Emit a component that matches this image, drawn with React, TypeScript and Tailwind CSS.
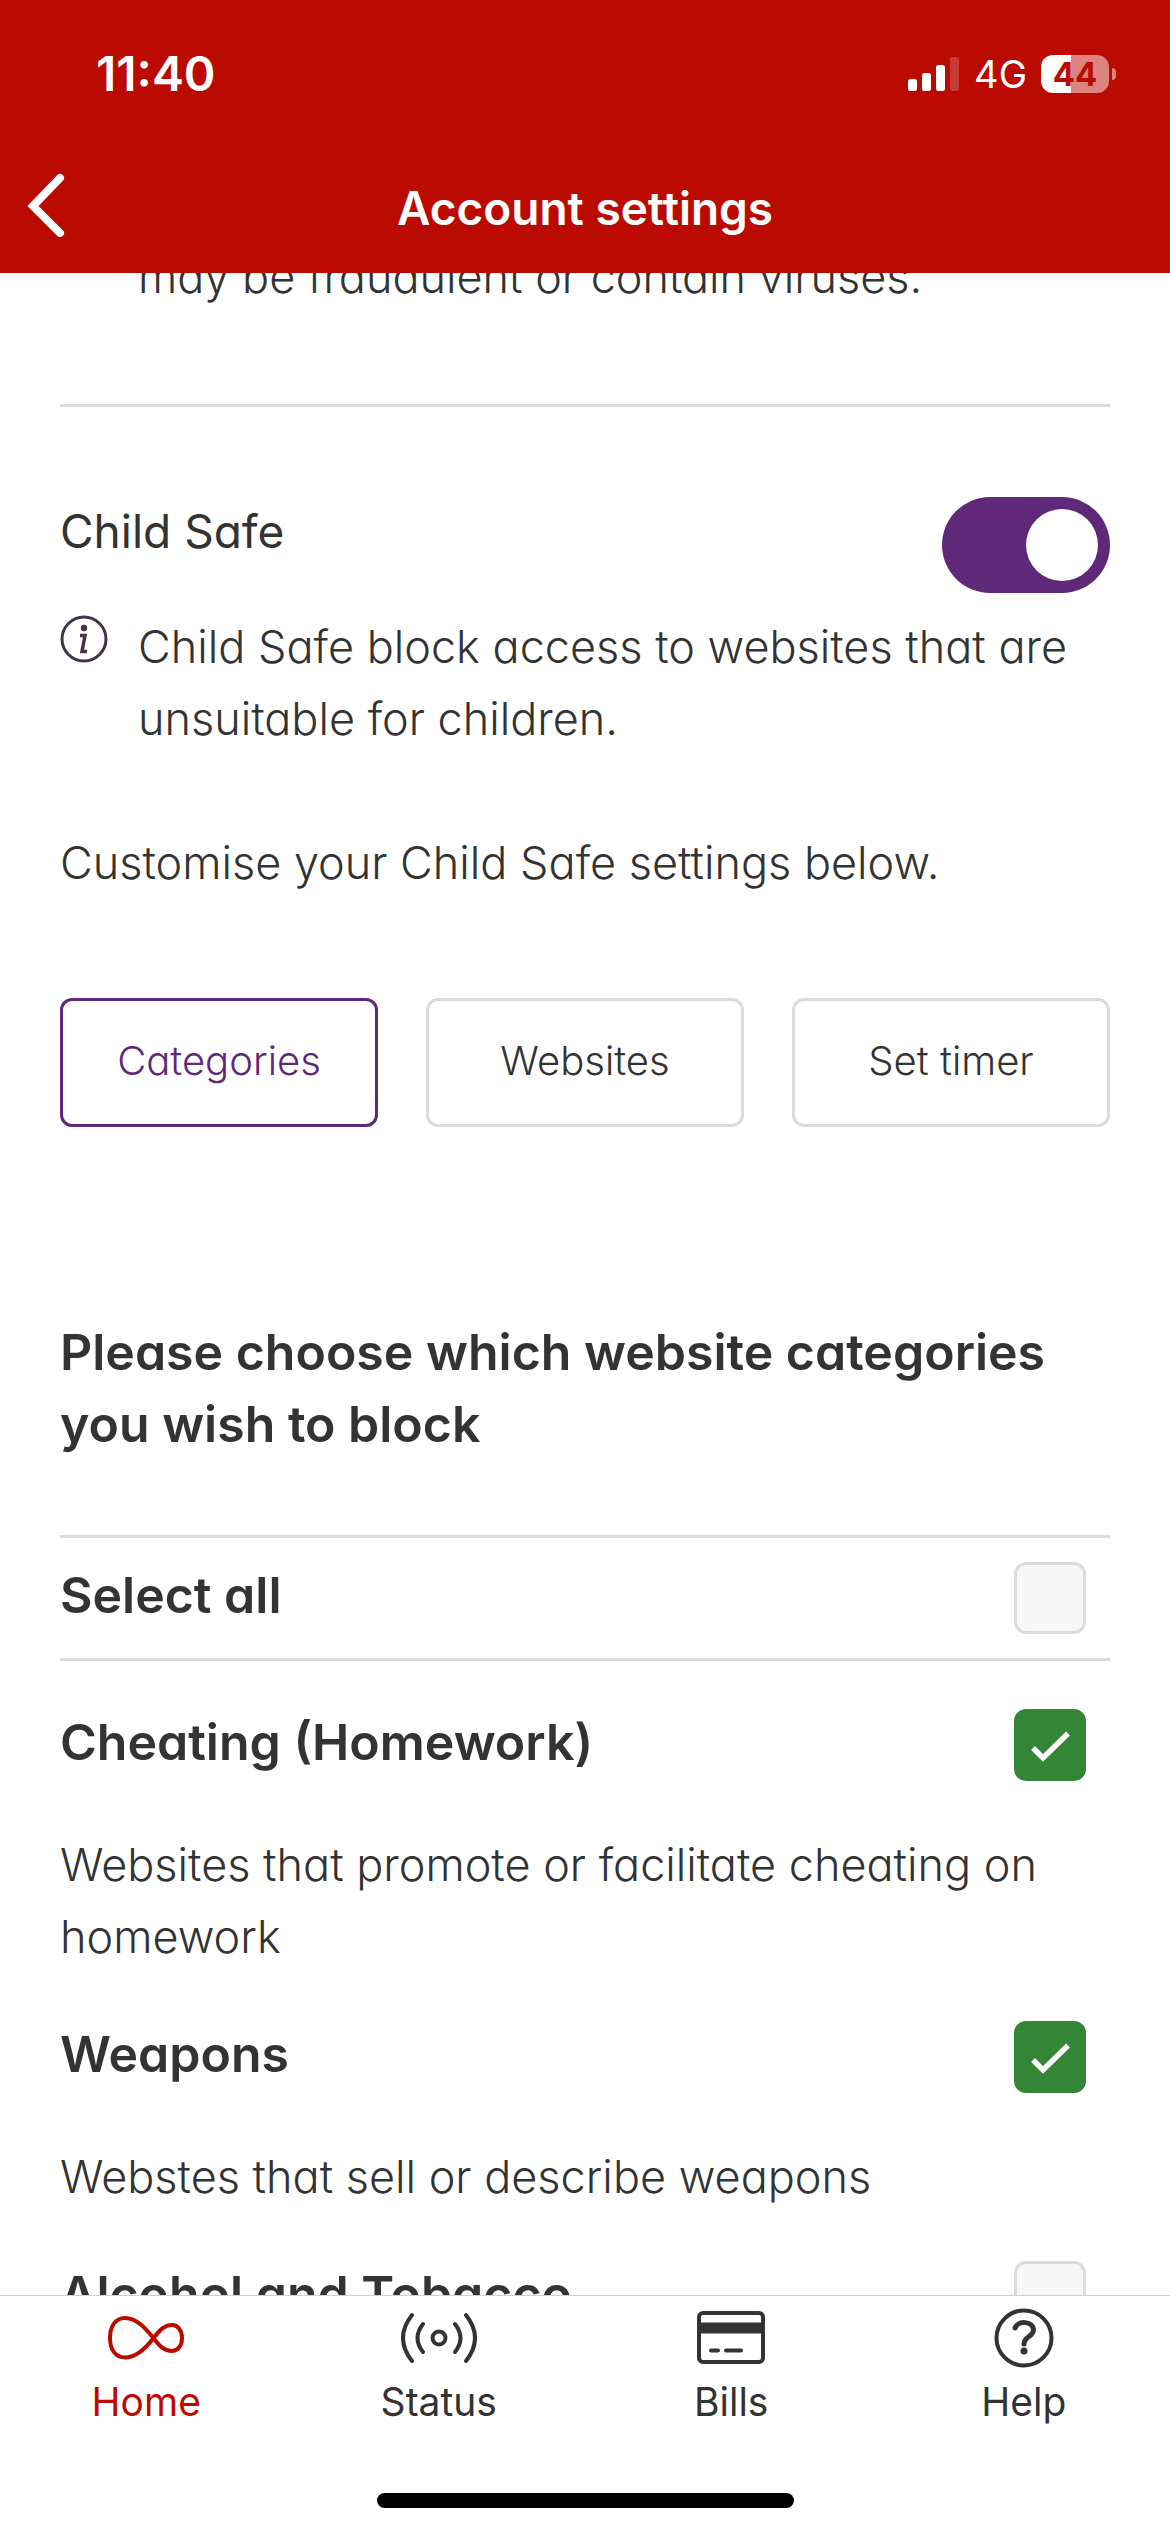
import React, { useState } from "react";

function Tick() {
  return (
    <svg viewBox="0 0 72 72" className="pointer-events-none absolute inset-0 hidden size-full peer-checked:block" fill="none" stroke="#fff" strokeWidth="5.500" aria-hidden="true">
      <path d="M19 39 29 49 54 24.500" />
    </svg>
  );
}

function CheckRow({ id, title, defaultChecked }: { id: string; title: string; defaultChecked?: boolean }) {
  return (
    <div className="flex items-start justify-between pr-6">
      <label htmlFor={id} className="text-[50px] leading-[66px] font-semibold">{title}</label>
      <span className="relative size-[72px] shrink-0">
        <input
          id={id}
          type="checkbox"
          defaultChecked={defaultChecked}
          className="peer block size-full appearance-none rounded-xl border-3 border-[#dbdbdb] bg-[#f7f7f7] checked:border-[#358537] checked:bg-[#358537]"
        />
        <Tick />
      </span>
    </div>
  );
}

function Category({ id, title, text, defaultChecked }: { id: string; title: string; text: string; defaultChecked?: boolean }) {
  return (
    <section className="flex flex-col gap-12 pb-12">
      <CheckRow id={id} title={title} defaultChecked={defaultChecked} />
      <p>{text}</p>
    </section>
  );
}

const tabs = ["Categories", "Websites", "Set timer"];

function HomeIcon() {
  return (
    <svg viewBox="0 0 76 60" className="h-[60px] w-[76px]" fill="none" stroke="currentColor" strokeWidth="4" aria-hidden="true">
      <path d="M45.500 30C38 21 29 10 17 10C7 10 2 19 2 30C2 41 7 49.500 17 49.500C29 49.500 38 40 45.500 30C51 23 56 17 64 17C70 17 74 22.500 74 30C74 37.500 70 43 64 43C56 43 51 37.500 45.500 30Z" />
    </svg>
  );
}

function StatusIcon() {
  return (
    <svg viewBox="0 0 76 60" className="h-[60px] w-[76px]" fill="none" stroke="currentColor" strokeWidth="4" strokeLinecap="round" aria-hidden="true">
      <circle cx="38" cy="30" r="6.500" />
      <path d="M22 16Q11 30 22 44M54 16Q65 30 54 44M11 7Q-7 30 11 53M65 7Q83 30 65 53" />
    </svg>
  );
}

function BillsIcon() {
  return (
    <svg viewBox="0 0 76 60" className="h-[60px] w-[76px]" fill="none" stroke="currentColor" strokeWidth="4" strokeLinecap="round" aria-hidden="true">
      <rect x="6" y="5" width="64" height="49" rx="4" />
      <path d="M6 20H70" strokeWidth="11" strokeLinecap="butt" />
      <path d="M18 42.500H25M33 42.500H48" />
    </svg>
  );
}

function HelpIcon() {
  return (
    <svg viewBox="0 0 76 60" className="h-[60px] w-[76px]" fill="none" stroke="currentColor" strokeWidth="4" aria-hidden="true">
      <circle cx="38" cy="30" r="27.500" />
      <path d="M29 20C32 12 47 13 47.500 22C47.500 29 38 28 38 36" strokeWidth="5" strokeLinecap="round" />
      <circle cx="38" cy="43" r="3.500" fill="currentColor" stroke="none" />
    </svg>
  );
}

const navItems = [
  { name: "Home", Icon: HomeIcon },
  { name: "Status", Icon: StatusIcon },
  { name: "Bills", Icon: BillsIcon },
  { name: "Help", Icon: HelpIcon },
];

export default function App() {
  const [tab, setTab] = useState("Categories");
  return (
    <div className="flex h-screen flex-col overflow-hidden bg-white font-['Inter','Liberation_Sans',sans-serif] text-[#333]">
      <header className="relative z-10 shrink-0 bg-[#bb0a00] text-white">
        <div className="flex h-36 items-center justify-between pt-1 pr-[54px] pl-24">
          <time className="text-[48px] font-semibold">11:40</time>
          <div className="flex items-center gap-3.5">
            <svg viewBox="0 0 52 34" className="h-[34px] w-[52px]" fill="#fff" role="img" aria-label="Signal strength">
              <rect x="0" y="22" width="9" height="12" rx="2.500" />
              <rect x="14" y="16" width="9" height="18" rx="2.500" />
              <rect x="28" y="8" width="9" height="26" rx="2.500" />
              <rect x="42" y="0" width="9" height="34" rx="2.500" opacity=".2" />
            </svg>
            <span className="text-[38px]">4G</span>
            <div className="flex items-center gap-[3px]">
              <span className="flex h-[38px] w-[68px] items-center justify-center rounded-xl bg-linear-to-r from-white from-44% to-[#dd8480] to-44% text-[33px] leading-[38px] font-bold text-[#bb0a00]">44</span>
              <span className="h-3 w-1 rounded-r-full bg-[#dd8480]" />
            </div>
          </div>
        </div>
        <div className="grid h-[129px] grid-cols-[1fr_auto_1fr] items-center">
          <button type="button" aria-label="Back" className="ml-6 w-12 pb-2">
            <svg viewBox="0 0 48 64" className="h-16 w-12" fill="none" stroke="#fff" strokeWidth="8" strokeLinecap="round" aria-hidden="true">
              <path d="M36 5 9 33 36 60" />
            </svg>
          </button>
          <h1 className="text-[46px] font-semibold [font-feature-settings:'cv11']">Account settings</h1>
          <span />
        </div>
      </header>

      <main className="min-h-0 flex-1 overflow-hidden px-[60px] text-[45px] leading-[72px] font-light [font-feature-settings:'cv11']">
        <p className="-mt-8 border-b-3 border-[#dbdbdb] pb-[91px] pl-[78px]">may be fraudulent or contain viruses.</p>

        <section className="pt-[90px]">
          <div className="flex h-[96px] items-start justify-between">
            <label htmlFor="child-safe" className="text-[46px] leading-[68px] font-normal">Child Safe</label>
            <input
              id="child-safe"
              type="checkbox"
              role="switch"
              defaultChecked
              className="h-24 w-[168px] appearance-none rounded-full bg-[#dbdbdb] p-3 before:block before:size-[72px] before:rounded-full before:bg-white checked:bg-[#5f2878] checked:before:ml-auto"
            />
          </div>
          <div className="flex gap-[30px] pt-[18px]">
            <svg viewBox="0 0 48 48" className="mt-1 size-12 shrink-0" fill="none" stroke="#43334a" strokeWidth="3.500" aria-hidden="true">
              <circle cx="24" cy="24" r="22" strokeWidth="3" />
              <path d="M20 20.500H25L22 36.500H27" />
              <circle cx="24" cy="13" r="3.200" fill="#43334a" stroke="none" />
            </svg>
            <p>Child Safe block access to websites that are unsuitable for children.</p>
          </div>
        </section>

        <p className="pt-[72px]">Customise your Child Safe settings below.</p>

        <div className="mt-[99px] grid grid-cols-3 gap-12">
          {tabs.map((name) => (
            <button
              key={name}
              type="button"
              aria-pressed={tab === name}
              onClick={() => setTab(name)}
              className="h-[129px] rounded-xl border-3 border-[#dbdbdb] pb-1 text-[40px] aria-pressed:border-[#5f2878] aria-pressed:text-[#5f2878]"
            >
              {name}
            </button>
          ))}
        </div>

        <h2 className="mt-[189px] text-[50px] font-semibold">Please choose which website categories you wish to block</h2>

        <div className="mt-[75px] mb-12 border-y-3 border-[#dbdbdb] py-6">
          <CheckRow id="all" title="Select all" />
        </div>
        <Category id="cheating" title="Cheating (Homework)" text="Websites that promote or facilitate cheating on homework" defaultChecked />
        <Category id="weapons" title="Weapons" text="Webstes that sell or describe weapons" defaultChecked />
        <CheckRow id="alcohol" title="Alcohol and Tobacco" />
      </main>

      <footer className="relative z-10 shrink-0 border-t border-[#d0d0d0] bg-white">
        <nav className="grid grid-cols-4 pt-3">
          {navItems.map(({ name, Icon }) => (
            <a
              key={name}
              href={"#" + name.toLowerCase()}
              aria-current={name === "Home" ? "page" : undefined}
              className="flex flex-col items-center gap-1.5 text-[39px] leading-[56px] aria-[current=page]:text-[#bb0a00]"
            >
              <Icon />
              {name}
            </a>
          ))}
        </nav>
        <div className="mx-auto mt-[63px] mb-6 h-[15px] w-[417px] rounded-full bg-black" />
      </footer>
    </div>
  );
}
